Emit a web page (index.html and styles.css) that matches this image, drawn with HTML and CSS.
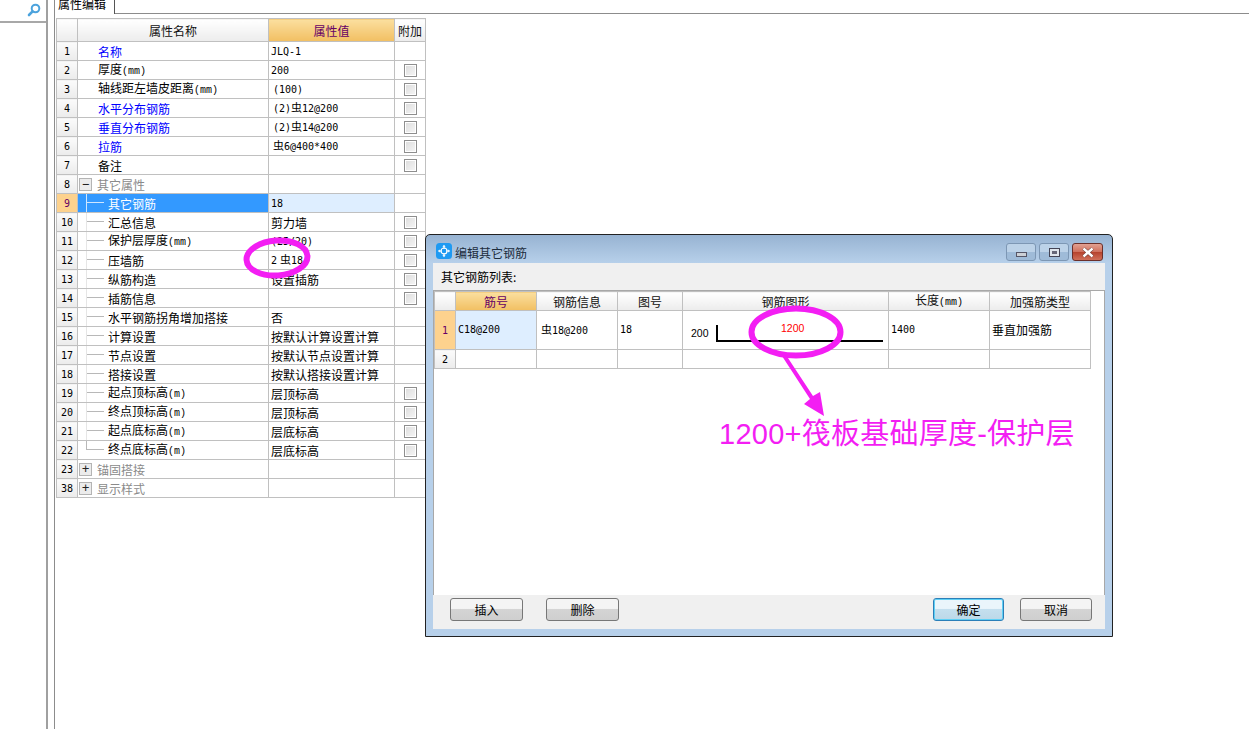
FILE: index.html
```html
<!DOCTYPE html>
<html lang="zh-CN">
<head>
    <meta charset="UTF-8">
    <title>属性编辑</title>
    <link rel="stylesheet" href="styles.css">
</head>
<body>
    <div class="app">
        <aside class="sidebar">
            <div class="search">
                <svg class="search-icon" width="14" height="14" viewBox="0 0 14 14">
                    <circle cx="8.5" cy="5.5" r="3.8" fill="#fff" stroke="#4ca3dd" stroke-width="2"/>
                    <path d="M5.6 8.4 L2 12" stroke="#4ca3dd" stroke-width="2.6" stroke-linecap="round"/>
                </svg>
            </div>
        </aside>
        <div class="gutter"></div>
        <main class="main">
            <div class="tabbar">
                <div class="tab">属性编辑</div>
                <div class="tab-rest"></div>
            </div>
            <table class="grid props">
                <colgroup>
                    <col class="c-num"><col class="c-name"><col class="c-val"><col class="c-add">
                </colgroup>
                <thead>
                    <tr class="head">
                        <th></th><th>属性名称</th><th class="on">属性值</th><th>附加</th>
                    </tr>
                </thead>
                <tbody>
                    <tr><td class="num">1</td><td class="name link">名称</td><td class="val">JLQ-1</td><td></td></tr>
                    <tr><td class="num">2</td><td class="name">厚度<span class="unit">(mm)</span></td><td class="val">200</td><td class="add"><i class="check"></i></td></tr>
                    <tr><td class="num">3</td><td class="name">轴线距左墙皮距离<span class="unit">(mm)</span></td><td class="val pad">(100)</td><td class="add"><i class="check"></i></td></tr>
                    <tr><td class="num">4</td><td class="name link">水平分布钢筋</td><td class="val pad">(2)<span class="bar">虫</span>12@200</td><td class="add"><i class="check"></i></td></tr>
                    <tr><td class="num">5</td><td class="name link">垂直分布钢筋</td><td class="val pad">(2)<span class="bar">虫</span>14@200</td><td class="add"><i class="check"></i></td></tr>
                    <tr><td class="num">6</td><td class="name link">拉筋</td><td class="val pad"><span class="bar">虫</span>6@400*400</td><td class="add"><i class="check"></i></td></tr>
                    <tr><td class="num">7</td><td class="name">备注</td><td class="val"></td><td class="add"><i class="check"></i></td></tr>
                    <tr><td class="num">8</td><td class="group"><i class="toggle">−</i>其它属性</td><td></td><td></td></tr>
                    <tr class="current"><td class="num">9</td><td class="child"><i class="tree"></i>其它钢筋</td><td class="val">18</td><td></td></tr>
                    <tr><td class="num">10</td><td class="child"><i class="tree"></i>汇总信息</td><td class="val cjk">剪力墙</td><td class="add"><i class="check"></i></td></tr>
                    <tr><td class="num">11</td><td class="child"><i class="tree"></i>保护层厚度<span class="unit">(mm)</span></td><td class="val">(25/20)</td><td class="add"><i class="check"></i></td></tr>
                    <tr><td class="num">12</td><td class="child"><i class="tree"></i>压墙筋</td><td class="val">2<span class="bar gap">虫</span>18</td><td class="add"><i class="check"></i></td></tr>
                    <tr><td class="num">13</td><td class="child"><i class="tree"></i>纵筋构造</td><td class="val cjk">设置插筋</td><td class="add"><i class="check"></i></td></tr>
                    <tr><td class="num">14</td><td class="child"><i class="tree"></i>插筋信息</td><td class="val"></td><td class="add"><i class="check"></i></td></tr>
                    <tr><td class="num">15</td><td class="child"><i class="tree"></i>水平钢筋拐角增加搭接</td><td class="val cjk">否</td><td></td></tr>
                    <tr><td class="num">16</td><td class="child"><i class="tree"></i>计算设置</td><td class="val cjk">按默认计算设置计算</td><td></td></tr>
                    <tr><td class="num">17</td><td class="child"><i class="tree"></i>节点设置</td><td class="val cjk">按默认节点设置计算</td><td></td></tr>
                    <tr><td class="num">18</td><td class="child"><i class="tree"></i>搭接设置</td><td class="val cjk">按默认搭接设置计算</td><td></td></tr>
                    <tr><td class="num">19</td><td class="child"><i class="tree"></i>起点顶标高<span class="unit">(m)</span></td><td class="val cjk">层顶标高</td><td class="add"><i class="check"></i></td></tr>
                    <tr><td class="num">20</td><td class="child"><i class="tree"></i>终点顶标高<span class="unit">(m)</span></td><td class="val cjk">层顶标高</td><td class="add"><i class="check"></i></td></tr>
                    <tr><td class="num">21</td><td class="child"><i class="tree"></i>起点底标高<span class="unit">(m)</span></td><td class="val cjk">层底标高</td><td class="add"><i class="check"></i></td></tr>
                    <tr><td class="num">22</td><td class="child"><i class="tree last"></i>终点底标高<span class="unit">(m)</span></td><td class="val cjk">层底标高</td><td class="add"><i class="check"></i></td></tr>
                    <tr><td class="num">23</td><td class="group"><i class="toggle">+</i>锚固搭接</td><td></td><td></td></tr>
                    <tr><td class="num">38</td><td class="group"><i class="toggle">+</i>显示样式</td><td></td><td></td></tr>
                </tbody>
            </table>
        </main>
    </div>

    <!-- 编辑其它钢筋 -->
    <section class="dialog">
        <header class="titlebar">
            <svg class="app-icon" width="16" height="16" viewBox="0 0 16 16">
                <rect width="16" height="16" rx="3.5" fill="#1e9af2"/>
                <circle cx="8" cy="8" r="3" fill="none" stroke="#fff" stroke-width="1.2"/>
                <path d="M8 3v3M8 10v3M3 8h3M10 8h3" stroke="#fff" stroke-width="1.2"/>
                <path d="M8 1.8l1.6 2H6.4zM8 14.2l1.6-2H6.4zM1.8 8l2-1.6v3.2zM14.2 8l-2-1.6v3.2z" fill="#fff"/>
            </svg>
            <span class="title">编辑其它钢筋</span>
            <div class="win-btns">
                <button class="win-btn"><i class="glyph-min"></i></button>
                <button class="win-btn"><i class="glyph-max"></i></button>
                <button class="win-btn close">
                    <svg width="16" height="11" viewBox="0 0 16 11">
                        <path d="M3.5 1.5l9 8M12.5 1.5l-9 8" stroke="#6b3a34" stroke-width="3.6"/>
                        <path d="M3.5 1.5l9 8M12.5 1.5l-9 8" stroke="#fff" stroke-width="2.4"/>
                    </svg>
                </button>
            </div>
        </header>
        <div class="dialog-body">
            <div class="list-label">其它钢筋列表:</div>
            <div class="list">
                <table class="grid bars">
                    <colgroup>
                        <col class="b-num"><col class="b-no"><col class="b-info"><col class="b-fig"><col class="b-shape"><col class="b-len"><col class="b-type">
                    </colgroup>
                    <thead>
                        <tr class="head">
                            <th></th><th class="on">筋号</th><th>钢筋信息</th><th>图号</th><th>钢筋图形</th><th>长度<span class="unit">(mm)</span></th><th>加强筋类型</th>
                        </tr>
                    </thead>
                    <tbody>
                        <tr class="tall current">
                            <td class="num">1</td>
                            <td class="val picked">C18@200</td>
                            <td class="val pad"><span class="bar">虫</span>18@200</td>
                            <td class="val">18</td>
                            <td class="shape">
                                <div class="shape-wrap">
                                    <span class="dim-left">200</span>
                                    <div class="rebar"><span class="dim-top">1200</span></div>
                                </div>
                            </td>
                            <td class="val">1400</td>
                            <td class="val cjk">垂直加强筋</td>
                        </tr>
                        <tr><td class="num">2</td><td></td><td></td><td></td><td></td><td></td><td></td></tr>
                    </tbody>
                </table>
            </div>
            <footer class="dialog-foot">
                <button class="btn">插入</button>
                <button class="btn">删除</button>
                <div class="spacer"></div>
                <button class="btn primary">确定</button>
                <button class="btn cancel">取消</button>
            </footer>
        </div>
    </section>

    <!-- 标注 -->
    <svg class="marks" width="1249" height="729" viewBox="0 0 1249 729">
        <ellipse cx="277" cy="258" rx="30.5" ry="17.5" transform="rotate(-4 277 258)" fill="none" stroke="#f31ef3" stroke-width="6"/>
        <ellipse cx="796" cy="332" rx="44.5" ry="23.5" fill="none" stroke="#f31ef3" stroke-width="6"/>
        <polygon points="782,356 786,355 813,396 820,392 824,416 804,404 810,399" fill="#f31ef3"/>
    </svg>
    <div class="note">1200+筏板基础厚度-保护层</div>
</body>
</html>
```

FILE: styles.css
```css
* {
    box-sizing: border-box;
}

html, body {
    margin: 0;
    height: 100%;
    overflow: hidden;
}

body {
    background-color: #fff;
    color: #000;
    font-family: "Noto Sans CJK SC", "Liberation Sans", sans-serif;
    font-size: 12px;
}

.app {
    display: flex;
    height: 729px;
}

/* left strip */
.sidebar {
    width: 48px;
    border-right: 2px solid #a0a0a0;
    flex-shrink: 0;
}

.search {
    height: 23px;
    border-bottom: 2px solid #a8a8a8;
    padding: 3px 0 0 27px;
}

.search-icon {
    display: block;
}

.gutter {
    width: 7px;
    flex-shrink: 0;
    border-right: 1px solid #8c8c8c;
}

.main {
    flex: 1;
}

/* tab */
.tabbar {
    display: flex;
    height: 14px;
    padding-left: 3px;
}

.tab {
    width: 57px;
    height: 14px;
    border-right: 1px solid #555;
    line-height: 8px;
    overflow: hidden;
    font-size: 12px;
}

.tab-rest {
    flex: 1;
    border-bottom: 1px solid #8c8c8c;
}

/* grids */
.grid {
    border-collapse: collapse;
    table-layout: fixed;
}

.grid td,
.grid th {
    border: 1px solid #c0c0c0;
    padding: 0;
    height: 19px;
    line-height: 13px;
    overflow: hidden;
    white-space: nowrap;
    font-weight: normal;
}

.props {
    width: 369px;
    margin: 4px 0 0 1px;
}

.c-num { width: 21px; }
.c-name { width: 191px; }
.c-val { width: 126px; }
.c-add { width: 31px; }

.head th {
    height: 23px;
    background: linear-gradient(#fff, #ececec);
    text-align: center;
    color: #111;
}

.head th.on {
    background: linear-gradient(#fbdf9f, #f2bf62);
    color: #660066;
}

.num {
    background: linear-gradient(#fbfbfb, #ebebeb);
    text-align: center;
    font-family: "DejaVu Sans Mono", monospace;
    font-size: 10px;
}

.name {
    padding-left: 20px !important;
}

.link {
    color: #0000ff;
}

.unit {
    font-size: 10px;
    font-family: "Liberation Mono", monospace;
    color: #000;
}

.val {
    padding-left: 2px !important;
    font-family: "DejaVu Sans Mono", "Noto Sans CJK SC", monospace;
    font-size: 10px;
}

.val.pad {
    padding-left: 4px !important;
}

.val.cjk {
    font-family: "Noto Sans CJK SC", sans-serif;
    font-size: 12px;
}

.bar {
    font-family: "Noto Sans CJK SC", sans-serif;
    font-size: 11px;
}

.bar.gap {
    margin-left: 3px;
}

.add {
    text-align: center;
    line-height: 0 !important;
}

.check {
    display: inline-block;
    width: 13px;
    height: 13px;
    border: 1px solid #8e8e8e;
    background: linear-gradient(135deg, #dcdcdc, #f6f6f6);
    box-shadow: inset 0 0 0 1px #fff;
    vertical-align: middle;
}

.group {
    color: #8a8a8a;
}

.toggle {
    display: inline-block;
    width: 13px;
    height: 13px;
    margin: 0 5px 0 1px;
    border: 1px solid #b4b4b4;
    background-color: #ececec;
    color: #222;
    font: 12px/11px "DejaVu Sans Mono", monospace;
    text-align: center;
    vertical-align: top;
}

.child {
    position: relative;
    padding-left: 30px !important;
}

.tree {
    position: absolute;
    left: 8px;
    top: -1px;
    bottom: -1px;
    width: 18px;
    border-left: 1px solid #e6e6e6;
}

.tree::after {
    content: "";
    position: absolute;
    left: 0;
    top: 9px;
    width: 17px;
    border-top: 1px solid #b8b8b8;
}

.tree.last {
    bottom: 9px;
    border-left-color: #b8b8b8;
}

tr.current .num {
    background: #fdd28e;
    color: #660066;
}

tr.current .child {
    background-color: #3399ff;
    color: #fff;
}

tr.current .child .tree,
tr.current .child .tree::after {
    border-color: #cfe6ff;
}

.props tr.current .val {
    background-color: #deeeff;
}

/* dialog */
.dialog {
    position: absolute;
    left: 425px;
    top: 234px;
    width: 688px;
    height: 403px;
    display: flex;
    flex-direction: column;
    border: 1px solid #222;
    border-radius: 5px 5px 0 0;
    background: linear-gradient(#97b3d2 0, #b7d0ea 28px);
    padding: 0 7px 7px;
}

.titlebar {
    display: flex;
    align-items: flex-start;
    height: 28px;
    flex-shrink: 0;
    margin: 0 -7px 0 0;
}

.app-icon {
    margin: 8px 4px 0 3px;
}

.title {
    margin-top: 9px;
    margin-left: -1px;
    flex: 1;
    color: #1c2c3c;
}

.win-btns {
    display: flex;
    gap: 3px;
    margin: 8px 9px 0 0;
}

.win-btn {
    width: 30px;
    height: 18px;
    padding: 0;
    display: flex;
    align-items: center;
    justify-content: center;
    border: 1px solid #7d97b4;
    border-radius: 3px;
    background: linear-gradient(#bcd2e8 50%, #9fbbd8 50%);
}

.win-btn.close {
    width: 31px;
    border-color: #6b2f2a;
    background: linear-gradient(#e2a192 0, #cf6f5c 50%, #b5412c 50%, #d0705a 100%);
}

.glyph-min {
    display: block;
    width: 11px;
    height: 5px;
    margin-top: 4px;
    border: 1px solid #556;
    background-color: #ccd0d6;
}

.glyph-max {
    display: block;
    width: 11px;
    height: 9px;
    border: 1px solid #445;
    background-color: #667;
    box-shadow: inset 0 0 0 2px #dfe5ec;
}

.dialog-body {
    flex: 1;
    display: flex;
    flex-direction: column;
    background-color: #f0f0f0;
    min-height: 0;
}

.list-label {
    height: 27px;
    padding: 7px 0 0 8px;
    line-height: 14px;
    flex-shrink: 0;
}

.list {
    flex: 1;
    background-color: #fff;
    border-top: 1px solid #a8a8a8;
    border-left: 1px solid #a8a8a8;
    border-right: 1px solid #a8a8a8;
}

.bars {
    width: 656px;
}

.b-num { width: 21px; }
.b-no { width: 81px; }
.b-info { width: 81px; }
.b-fig { width: 65px; }
.b-shape { width: 206px; }
.b-len { width: 101px; }
.b-type { width: 101px; }

.bars .head th {
    height: 19px;
}

.bars .tall td {
    height: 39px;
}

.bars .val {
    padding-bottom: 1px;
}

.bars .picked {
    background-color: #deeeff;
}

.shape-wrap {
    position: relative;
    height: 38px;
    font-family: "Liberation Sans", sans-serif;
    font-size: 10.5px;
}

.dim-left {
    position: absolute;
    left: 8px;
    top: 16px;
}

.rebar {
    position: absolute;
    left: 33px;
    top: 14px;
    width: 167px;
    height: 17px;
    border-left: 2px solid #000;
    border-bottom: 2px solid #000;
}

.dim-top {
    position: absolute;
    left: 63px;
    top: -3px;
    color: #ff0000;
}

.dialog-foot {
    display: flex;
    align-items: flex-start;
    height: 34px;
    flex-shrink: 0;
    gap: 23px;
    padding: 3px 13px 0 17px;
}

.spacer {
    flex: 1;
}

.btn {
    width: 73px;
    height: 23px;
    padding: 0;
    border: 1px solid #777;
    border-radius: 3px;
    background: linear-gradient(#f4f4f4 45%, #d4d4d4 50%, #cfcfcf 100%);
    font-family: "Noto Sans CJK SC", sans-serif;
    font-size: 12px;
    color: #000;
}

.btn.primary {
    width: 71px;
    margin-right: -7px;
    border-color: #2b7fb8;
    box-shadow: inset 0 0 0 1px #5fd0f5;
    background: linear-gradient(#eaf5fb 45%, #c4dfee 50%, #bcd8e8 100%);
}

.btn.cancel {
    width: 72px;
}

/* annotations */
.marks {
    position: absolute;
    left: 0;
    top: 0;
    pointer-events: none;
}

.note {
    position: absolute;
    left: 719px;
    top: 415px;
    font-family: "Liberation Sans", "Noto Sans CJK SC", sans-serif;
    font-size: 29px;
    letter-spacing: 0.25px;
    line-height: 38px;
    color: #f31ef3;
    white-space: nowrap;
}
```
